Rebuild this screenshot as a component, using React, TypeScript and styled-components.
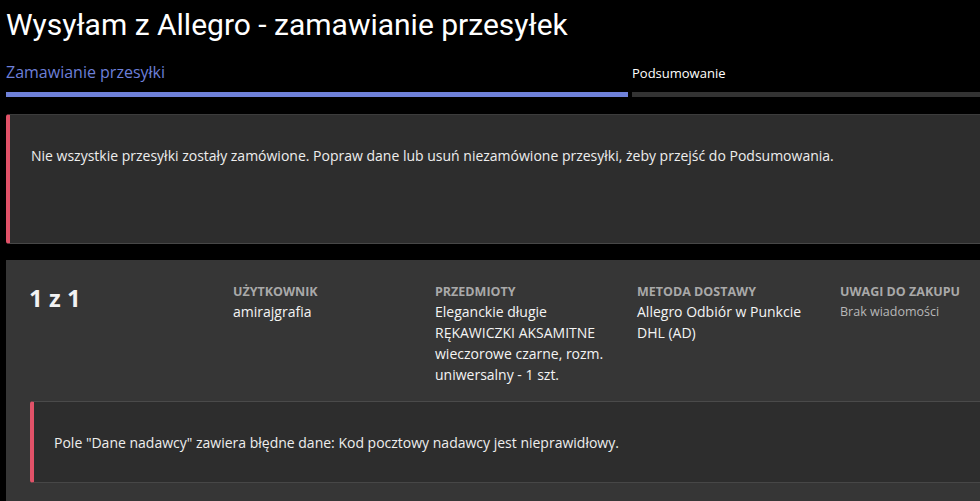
import React from "react";
import styled, { createGlobalStyle } from "styled-components";

const Global = createGlobalStyle`
  html, body { margin: 0; padding: 0; background: #000; }
  body { font-family: "Open Sans", "Liberation Sans", sans-serif; color: #fff; overflow: hidden; }
`;

const Page = styled.div`
  width: 980px;
  height: 501px;
  overflow: hidden;
  background: #000;
  padding-left: 6px;
  box-sizing: border-box;
`;

const Title = styled.h1`
  margin: 0;
  padding-top: 6px;
  font-family: Roboto, "Liberation Sans", sans-serif;
  font-weight: 400;
  font-size: 30px;
  line-height: 38px;
  color: #fff;
  white-space: nowrap;
`;

const Steps = styled.div`
  display: grid;
  grid-template-columns: 622px 1fr;
  column-gap: 4px;
  margin-top: 10px;
  margin-right: -10px;
`;

const Step = styled.div`
  display: flex;
  flex-direction: column;
  justify-content: flex-end;
  height: 43px;
`;

const StepLabel = styled.div<{ $active?: boolean }>`
  font-size: ${(p) => (p.$active ? "16px" : "13px")};
  line-height: 22px;
  color: ${(p) => (p.$active ? "#6c7fd8" : "#fff")};
  padding-bottom: ${(p) => (p.$active ? "9px" : "8px")};
  white-space: nowrap;
`;

const StepBar = styled.div<{ $active?: boolean }>`
  height: 5px;
  background: ${(p) => (p.$active ? "#6f81d9" : "#333333")};
`;

const Alert = styled.div<{ $inner?: boolean }>`
  box-sizing: border-box;
  display: flex;
  align-items: center;
  background: #2d2d2d;
  border-left: 4px solid #e15268;
  border-top: 1px solid ${(p) => (p.$inner ? "#4a4a4a" : "#3c3c3c")};
  border-bottom: 1px solid #474747;
  border-radius: 3px 0 0 3px;
  margin-right: -10px;
  font-size: 14px;
  color: #eeeeee;
  white-space: nowrap;
`;

const TopAlert = styled(Alert)`
  margin-top: 17px;
  height: 130px;
  align-items: flex-start;
  padding: 31px 0 0 21px;
`;

const InnerAlert = styled(Alert)`
  margin-left: 24px;
  height: 82px;
  padding-left: 20px;
`;

const Card = styled.section`
  margin-top: 16px;
  margin-right: -10px;
  background: #363636;
  padding: 22px 0 0 0;
  height: 260px;
  box-sizing: border-box;
`;

const Row = styled.div`
  display: grid;
  grid-template-columns: 202px 202px 202px 203px 1fr;
  padding-left: 25px;
  height: 119px;
`;

const Counter = styled.div`
  font-size: 24px;
  font-weight: 700;
  line-height: 32px;
  color: #f2f2f2;
  margin-left: -2px;
`;

const Field = styled.div`
  display: flex;
  flex-direction: column;
`;

const Label = styled.div`
  font-size: 12.5px;
  font-weight: 700;
  line-height: 18px;
  color: #a9a9a9;
  text-transform: uppercase;
  padding-top: 1px;
`;

const Value = styled.div<{ $muted?: boolean }>`
  font-size: ${(p) => (p.$muted ? "12.5px" : "14px")};
  line-height: 21px;
  color: ${(p) => (p.$muted ? "#b8b8b8" : "#f4f4f4")};
  padding-right: 18px;
`;

export default function App() {
  return (
    <>
      <Global />
      <Page>
        <Title>Wysyłam z Allegro - zamawianie przesyłek</Title>
        <Steps>
          <Step>
            <StepLabel $active>Zamawianie przesyłki</StepLabel>
            <StepBar $active />
          </Step>
          <Step>
            <StepLabel>Podsumowanie</StepLabel>
            <StepBar />
          </Step>
        </Steps>
        <TopAlert>
          Nie wszystkie przesyłki zostały zamówione. Popraw dane lub usuń niezamówione przesyłki, żeby przejść do Podsumowania.
        </TopAlert>
        <Card>
          <Row>
            <Counter>1 z 1</Counter>
            <Field>
              <Label>Użytkownik</Label>
              <Value>amirajgrafia</Value>
            </Field>
            <Field>
              <Label>Przedmioty</Label>
              <Value>Eleganckie długie RĘKAWICZKI AKSAMITNE wieczorowe czarne, rozm. uniwersalny - 1 szt.</Value>
            </Field>
            <Field>
              <Label>Metoda dostawy</Label>
              <Value>Allegro Odbiór w Punkcie DHL (AD)</Value>
            </Field>
            <Field>
              <Label>Uwagi do zakupu</Label>
              <Value $muted>Brak wiadomości</Value>
            </Field>
          </Row>
          <InnerAlert $inner>
            Pole "Dane nadawcy" zawiera błędne dane: Kod pocztowy nadawcy jest nieprawidłowy.
          </InnerAlert>
        </Card>
      </Page>
    </>
  );
}
